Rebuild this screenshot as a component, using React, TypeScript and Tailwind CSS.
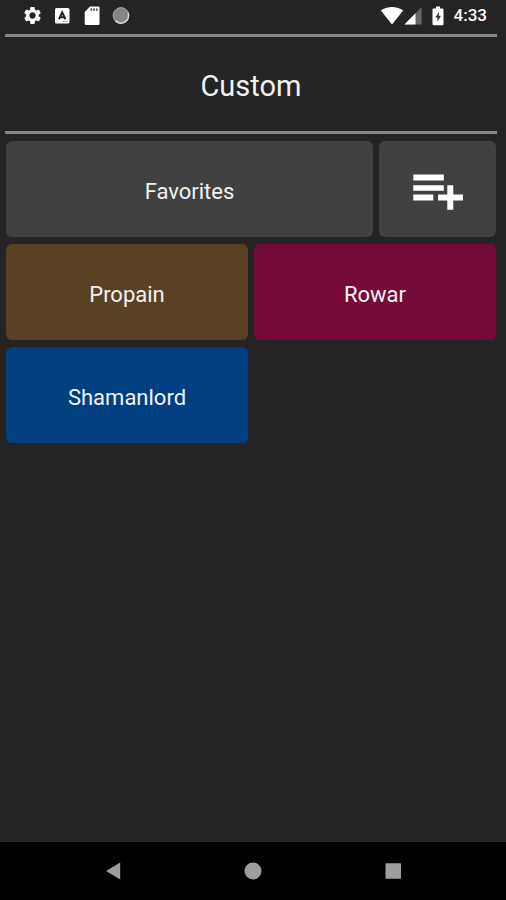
import { MdSettings } from "react-icons/md";

const PLAYERS = [
  { name: "Propain", color: "bg-[#5b4124]" },
  { name: "Rowar", color: "bg-[#750a38]" },
  { name: "Shamanlord", color: "bg-[#004080]" },
];

function StatusBar() {
  return (
    <div className="flex h-[31px] items-center justify-between pl-[22px] pr-[19px] text-white">
      <div className="flex items-center gap-3">
        <MdSettings className="size-[21px]" />
        <svg className="h-5 w-[15px]" viewBox="0 0 15 20">
          <rect x="0" y="2" width="14.5" height="15.5" rx="1.5" fill="currentColor" />
          <path d="M4 13.2 7.2 6.4l3.2 6.8M5.2 11.2h4" stroke="#242424" strokeWidth="2" fill="none" />
          <path d="M7.5 15.4h5" stroke="#aaa" strokeWidth="1" />
        </svg>
        <svg className="ml-0.5 h-5 w-4" viewBox="0 0 16 20">
          <path d="M6 .5h8.2a1.3 1.3 0 0 1 1.3 1.3v16a1.3 1.3 0 0 1-1.3 1.3H2A1.3 1.3 0 0 1 .7 17.8V6z" fill="currentColor" />
          <path d="M7.2 2.4v2.4M10 2.4v2.4M12.8 2.4v2.4" stroke="#555" strokeWidth="1.8" />
        </svg>
        <svg className="h-5 w-[18px]" viewBox="0 0 18 20">
          <circle cx="9" cy="9.5" r="7.9" fill="#858585" stroke="#a5a5a5" strokeWidth="1" />
          <path d="M16 6.8A7.5 7.5 0 0 1 3.5 14.6" stroke="#d8d8d8" strokeWidth="1.6" fill="none" />
        </svg>
      </div>
      <div className="flex items-center">
        <svg className="h-5 w-6" viewBox="0 0 24 20">
          <path d="M12 18.6.8 4.6C4 2.1 7.8.9 12 .9s8 1.2 11.2 3.7z" fill="currentColor" />
        </svg>
        <svg className="h-5 w-[18px]" viewBox="0 0 18 20">
          <path d="M17.6 1v17.6H.5z" fill="#666" />
          <path d="M11.5 7.3v11.3H.5z" fill="currentColor" />
        </svg>
        <svg className="ml-2.5 h-5 w-3" viewBox="0 0 12 20">
          <path d="M4 .6h4v2h2.3a1.2 1.2 0 0 1 1.2 1.2v14.3a1.2 1.2 0 0 1-1.2 1.2H1.7A1.2 1.2 0 0 1 .5 18.1V3.8a1.2 1.2 0 0 1 1.2-1.2H4z" fill="currentColor" />
          <path d="M7.3 5.4 3.2 11.4h2.2v4.4L9 9.8H6.6z" fill="#333" />
        </svg>
        <span className="ml-2.5 text-[17px] font-medium">4:33</span>
      </div>
    </div>
  );
}

function NavigationBar() {
  return (
    <nav className="flex h-[58px] items-center justify-center bg-black text-[#9e9e9e]">
      <button type="button" aria-label="Back" className="flex w-[140px] justify-center">
        <svg className="size-5" viewBox="0 0 20 20" fill="currentColor">
          <path d="M17.2 1.5v17L3 10z" />
        </svg>
      </button>
      <button type="button" aria-label="Home" className="flex w-[140px] justify-center">
        <svg className="size-5" viewBox="0 0 20 20" fill="currentColor">
          <circle cx="10" cy="10" r="8.5" />
        </svg>
      </button>
      <button type="button" aria-label="Recent apps" className="flex w-[140px] justify-center">
        <svg className="size-5" viewBox="0 0 20 20" fill="currentColor">
          <rect x="2.5" y="2.2" width="15.5" height="15.6" rx="0.6" />
        </svg>
      </button>
    </nav>
  );
}

export default function App() {
  return (
    <div className="flex min-h-screen flex-col bg-[#242424] font-['Roboto',sans-serif] text-[#f2f2f2]">
      <StatusBar />

      <main className="flex-1 pl-[6px] pr-[10px] pt-[3px]">
        <header className="-mx-px flex h-[100px] items-center justify-center border-y-3 border-[#868686] pt-1.5">
          <h1 className="text-[29px]">Custom</h1>
        </header>

        <div className="mt-[7px] flex gap-[6px] text-[22px]">
          <button type="button" className="h-24 flex-1 rounded-md bg-[#414141] pt-1">
            Favorites
          </button>
          <button
            type="button"
            aria-label="Add to list"
            className="flex h-24 w-[117px] items-center justify-center rounded-md bg-[#414141] pt-1 text-white"
          >
            <svg className="h-10 w-[52px]" viewBox="0 0 52 40" fill="currentColor">
              <path d="M1.3 3.5h30.5v6H1.3zM1.3 14.2h30.5v5.6H1.3zM1.3 23.5h20v6h-20z" />
              <path d="M35.3 14.2h6v9.3H51v6h-9.7v9.2h-6v-9.2h-9.2v-6h9.2z" />
            </svg>
          </button>
        </div>

        <div className="mt-[7px] grid grid-cols-2 gap-x-[6px] gap-y-[7px] text-[22px]">
          {PLAYERS.map((player) => (
            <button key={player.name} type="button" className={`h-24 rounded-md pt-1 ${player.color}`}>
              {player.name}
            </button>
          ))}
        </div>
      </main>

      <NavigationBar />
    </div>
  );
}
